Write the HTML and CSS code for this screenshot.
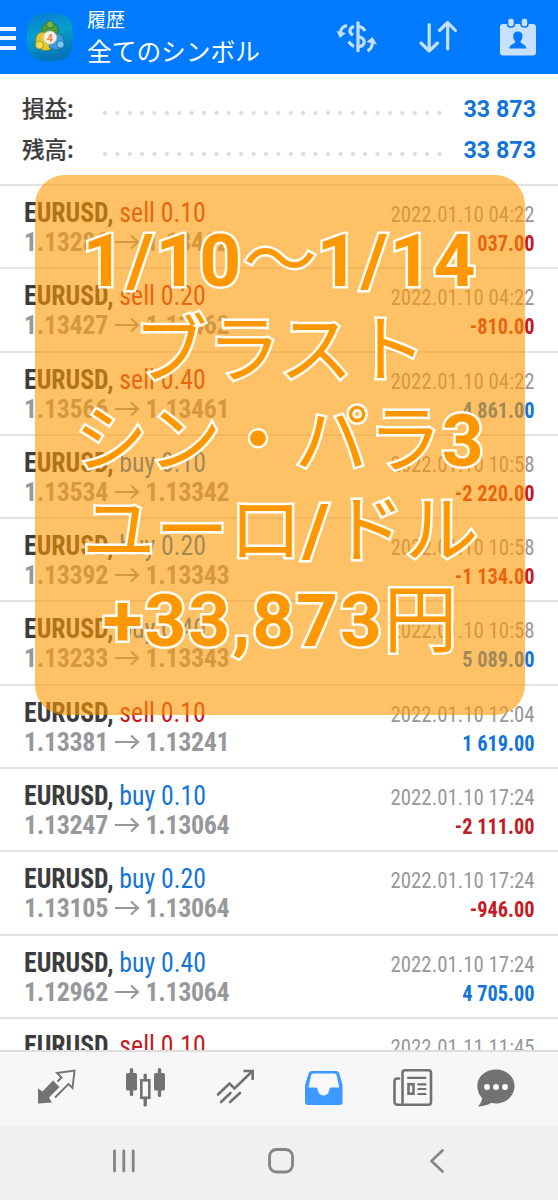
FILE: index.html
```html
<!DOCTYPE html>
<html lang="ja">
<head>
    <meta charset="UTF-8">
    <meta name="viewport" content="width=device-width, initial-scale=1.0">
    <title>履歴 - 全てのシンボル</title>
    <link rel="stylesheet" href="styles.css">
</head>
<body>
    <div class="phone">
        <header class="topbar">
            <div class="menu-button"><span></span><span></span><span></span></div>
            <svg class="app-icon" width="48" height="50" viewBox="0 0 48 50">
                <defs>
                    <linearGradient id="icon-bg" x1="0" y1="0" x2="0.25" y2="1">
                        <stop offset="0" stop-color="#0879d4"/>
                        <stop offset="0.5" stop-color="#06a0cc"/>
                        <stop offset="1" stop-color="#0774b8"/>
                    </linearGradient>
                </defs>
                <path d="M24 1C42 1 47 6 47 25S42 49 24 49S1 44 1 25S6 1 24 1Z" fill="url(#icon-bg)"/>
                <path d="M17 25C13 16 18 10 24 10.500S35 16 31 25Z" fill="#4b9a3c" stroke="#2c6b2c" stroke-width=".7"/>
                <path d="M22 22C14 17 9 23 10 31L16 38C23 39.500 26 37 27 33Z" fill="#e5c62f" stroke="#8d8a22" stroke-width=".7"/>
                <path d="M27 22C36 19 39 28 38 33C34 40 27 38 23 35Z" fill="#3f9ad8" stroke="#1d5f9a" stroke-width=".7"/>
                <circle cx="24" cy="12.500" r="3.600" fill="#73b54c" stroke="#2c6b2c" stroke-width=".7"/>
                <circle cx="13.500" cy="33" r="4" fill="#f4dc4d" stroke="#8d8a22" stroke-width=".7"/>
                <circle cx="34.500" cy="32.500" r="3.600" fill="#78c9f2" stroke="#1d5f9a" stroke-width=".7"/>
                <circle cx="24" cy="25.500" r="6.500" fill="#f6f1ea" stroke="#c9d0c4" stroke-width=".8"/>
                <text x="24" y="29.500" class="icon-digit">4</text>
            </svg>
            <div class="titles">
                <div class="title-small">履歴</div>
                <div class="title-big">全てのシンボル</div>
            </div>
            <div class="actions">
                <svg width="42" height="34" viewBox="0 0 42 34" fill="none" stroke="#c4e0ff" stroke-width="3.200">
                    <path d="M22 1.500V32"/>
                    <path d="M29 11C27.500 8 25 6.500 22 6.500M18 6.500C13 8 12.500 12.500 17 15.200M22 16.500C30 18 30.500 25.500 22 27M18 26.500C15.500 25.500 14 23.500 12.500 21.500"/>
                    <path d="M11 5.500C6.500 6.500 5 9 4.500 12"/>
                    <path d="M.5 11L10 13L4 18Z" fill="#c4e0ff" stroke="none"/>
                    <path d="M31.500 31C35 29 36.500 26 36.500 22"/>
                    <path d="M30.500 22L36.500 17L41 24.500Z" fill="#c4e0ff" stroke="none"/>
                </svg>
                <svg width="38" height="34" viewBox="0 0 38 34" fill="none" stroke="#c4e0ff" stroke-width="3.200" stroke-linecap="round" stroke-linejoin="round">
                    <path d="M10.200 4.500V31M2 23L10.200 31L18.500 23"/>
                    <path d="M28.700 29V2.500M20.500 10.500L28.700 2.500L36.400 10.500"/>
                </svg>
                <svg width="36" height="38" viewBox="0 0 36 38">
                    <rect x="0" y="6" width="36" height="31.500" rx="3" fill="#c9e1ff"/>
                    <rect x="7.500" y="0" width="7" height="9" rx="3" fill="#c9e1ff" stroke="#007aff" stroke-width="1.500"/>
                    <rect x="21" y="0" width="7" height="9" rx="3" fill="#c9e1ff" stroke="#007aff" stroke-width="1.500"/>
                    <path d="M17.800 13.500C21 13.500 22.700 15.500 22.500 18.500C22.300 21 21 22.500 20.500 23.500C20.500 26.500 26 25.500 26.300 30.500H9.300C9.600 25.500 15.300 26.500 15.300 23.500C14.500 22.500 13.400 21 13.200 18.500C13 15.500 14.700 13.500 17.800 13.500Z" fill="#007aff"/>
                </svg>
            </div>
        </header>

        <section class="summary">
            <div class="summary-row">
                <span class="summary-label">損益:</span>
                <span class="dots"></span>
                <span class="summary-value">33 873</span>
            </div>
            <div class="summary-row">
                <span class="summary-label">残高:</span>
                <span class="dots"></span>
                <span class="summary-value">33 873</span>
            </div>
        </section>

        <!-- trades -->
        <ul class="trades" id="trades"></ul>

        <nav class="tabs">
            <svg width="40" height="40" viewBox="0 0 40 40">
                <path d="M1 35.500V20.500L5.500 23.500L16 12.500L22.500 19L12 29.500L15 34.500Z" fill="#727272"/>
                <path d="M20.500 13.500L24.500 9.500L20 5L37.500 2.500L35.500 20L31.500 16L18 29.500" fill="none" stroke="#727272" stroke-width="1.900"/>
            </svg>
            <svg width="40" height="40" viewBox="0 0 40 40" fill="#727272">
                <rect x="1" y="5" width="11" height="17.500" rx="1.500"/>
                <rect x="4.800" y="0" width="3.400" height="28" rx="1.500"/>
                <rect x="29" y="5" width="11" height="17.500" rx="1.500"/>
                <rect x="32.800" y="0" width="3.400" height="29" rx="1.500"/>
                <rect x="18.500" y="5.500" width="3.400" height="7" rx="1.500"/>
                <rect x="18.500" y="28" width="3.400" height="10.500" rx="1.500"/>
                <rect x="16.300" y="12.300" width="8" height="17.500" fill="#f7f7f7" stroke="#727272" stroke-width="2.600"/>
            </svg>
            <svg width="40" height="40" viewBox="0 0 40 40" fill="none" stroke="#727272" stroke-width="2.600" stroke-linecap="round">
                <path d="M2 26.500L13.500 15.500L18.500 20.500L36 3.500"/>
                <path d="M27.500 3H36.700V12" stroke-linecap="butt"/>
                <path d="M5 34L14.500 25M14 34L24 25"/>
            </svg>
            <svg width="40" height="40" viewBox="0 0 40 40">
                <path d="M8 3H32Q34.500 3 35.200 5L38.500 17V34Q38.500 37 35.500 37H4Q1 37 1 34V17L4.800 5Q5.500 3 8 3Z" fill="#3d99ff"/>
                <path d="M9.500 5.500H30.500Q32 5.500 32.500 7L35.300 19.500H27.500Q25.500 19.500 25.500 21Q24.500 27.500 19.600 27.500T13.500 21Q13.500 19.500 12 19.500H4.500L7.200 7Q7.600 5.500 9.500 5.500Z" fill="#f8f8f8"/>
            </svg>
            <svg width="40" height="40" viewBox="0 0 40 40" fill="none" stroke="#727272" stroke-width="2.600">
                <path d="M9.500 34.500V5Q9.500 2.300 12 2.300H35.500Q38 2.300 38 5V34Q38 36.700 35.500 36.700H4.500Q1.500 36.700 1.500 33.500V13Q1.500 10.500 4.500 10.500H6" stroke-linecap="round"/>
                <path d="M15 9.800H32.500M25.300 16.300H32.500M25.300 21H32.500M25.300 26H32.500" stroke-linecap="round" stroke-width="2.200"/>
                <rect x="15.500" y="16.200" width="5" height="9.500"/>
            </svg>
            <svg width="40" height="40" viewBox="0 0 40 40">
                <path d="M20 1.500C30.500 1.500 38.500 8.500 38.500 18S30.500 35.500 20 35.500Q17.500 35.500 15.500 34.800Q9 38.500 1.800 38.700Q6 34.500 6 30Q1.300 25 1.300 18C1.300 8.500 9.500 1.500 20 1.500Z" fill="#727272"/>
                <g fill="#fff"><circle cx="11" cy="19" r="2.900"/><circle cx="20" cy="19" r="2.900"/><circle cx="29" cy="19" r="2.900"/></g>
            </svg>
        </nav>

        <footer class="system-nav">
            <svg width="24" height="26" viewBox="0 0 24 26" stroke="#858585" stroke-width="2.800" stroke-linecap="round">
                <path d="M2.500 3V23M11.800 3V23M21.200 3V23"/>
            </svg>
            <svg class="home" width="26" height="26" viewBox="0 0 26 26" fill="none" stroke="#858585" stroke-width="2.800">
                <rect x="1.500" y="1.500" width="23" height="22.500" rx="7"/>
            </svg>
            <svg width="16" height="26" viewBox="0 0 16 26" fill="none" stroke="#858585" stroke-width="2.600" stroke-linecap="round" stroke-linejoin="round">
                <path d="M13.500 2.500L2.500 13L13.500 23.500"/>
            </svg>
        </footer>

        <!-- caption over the list -->
        <div class="caption">
            <p><b>1/10</b>〜<b>1/14</b></p>
            <p>ブラスト</p>
            <p>シン・パラ<b>3</b></p>
            <p>ユーロ<b>/</b>ドル</p>
            <p><b>+33,873</b>円</p>
        </div>
    </div>

    <script>
        const trades = [
            ['sell', '0.10', '1.13286', '1.13462', '2022.01.10 04:22', '-1 037.00'],
            ['sell', '0.20', '1.13427', '1.13462', '2022.01.10 04:22', '-810.00'],
            ['sell', '0.40', '1.13566', '1.13461', '2022.01.10 04:22', '4 861.00'],
            ['buy', '0.10', '1.13534', '1.13342', '2022.01.10 10:58', '-2 220.00'],
            ['buy', '0.20', '1.13392', '1.13343', '2022.01.10 10:58', '-1 134.00'],
            ['buy', '0.40', '1.13233', '1.13343', '2022.01.10 10:58', '5 089.00'],
            ['sell', '0.10', '1.13381', '1.13241', '2022.01.10 12:04', '1 619.00'],
            ['buy', '0.10', '1.13247', '1.13064', '2022.01.10 17:24', '-2 111.00'],
            ['buy', '0.20', '1.13105', '1.13064', '2022.01.10 17:24', '-946.00'],
            ['buy', '0.40', '1.12962', '1.13064', '2022.01.10 17:24', '4 705.00'],
            ['sell', '0.10', '', '', '2022.01.11 11:45', '']
        ];

        const arrow = '<svg class="arrow" width="25" height="16" viewBox="0 0 25 16"><path d="M0 8H23M16 1.500L23 8L16 14.500"/></svg>';

        document.getElementById('trades').innerHTML = trades.map(([side, lot, open, close, time, profit]) => `
            <li class="trade">
                <div class="trade-left">
                    <div class="symbol"><b>EURUSD,</b> <span class="${side}">${side} ${lot}</span></div>
                    <div class="prices">${open ? `<span>${open}</span>${arrow}<span>${close}</span>` : ''}</div>
                </div>
                <div class="trade-right">
                    <div class="time">${time}</div>
                    <div class="profit ${profit.startsWith('-') ? 'loss' : 'gain'}">${profit}</div>
                </div>
            </li>`).join('');
    </script>
</body>
</html>
```
FILE: styles.css
```css
* {
    box-sizing: border-box;
}
body {
    margin: 0;
    font-family: Roboto, "Noto Sans CJK JP", sans-serif;
    background-color: #fff;
    color: #3c3c3e;
}
.phone {
    position: relative;
    display: flex;
    flex-direction: column;
    width: 558px;
    height: 1200px;
    overflow: hidden;
}

/* top bar */
.topbar {
    display: flex;
    align-items: center;
    flex: 0 0 74px;
    background-color: #007aff;
    color: #fff;
}
.menu-button {
    display: flex;
    flex-direction: column;
    gap: 5.500px;
    width: 16px;
    margin-top: 2px;
}
.menu-button span {
    height: 4px;
    background-color: #eef7ff;
}
.app-icon {
    margin-left: 10px;
}
.icon-digit {
    font: bold 11px Roboto, sans-serif;
    fill: #f08a3c;
    text-anchor: middle;
}
.titles {
    margin-left: 13px;
    padding-top: 2px;
    font-family: "Noto Sans CJK JP", sans-serif;
}
.title-small {
    font-size: 19px;
    line-height: 24px;
}
.title-big {
    font-size: 24.700px;
    line-height: 39px;
    white-space: nowrap;
}
.actions {
    display: flex;
    align-items: center;
    margin-left: auto;
    margin-right: 22px;
    gap: 43px;
}
.actions svg:first-child {
    margin-right: -2px;
}

/* totals */
.summary {
    flex: 0 0 110px;
    padding: 14px 22px 0;
}
.summary-row {
    display: flex;
    align-items: center;
    height: 41px;
}
.summary-label {
    width: 79px;
    margin-top: -4px;
    font: 500 22.500px "Noto Sans CJK JP", sans-serif;
    -webkit-text-stroke: 0.2px #3c3c3e;
}
.dots {
    width: 347px;
    height: 4px;
    margin-top: 8px;
    background: radial-gradient(circle at 4px 2px, #dcdcde 1.700px, transparent 2.300px) 0 0 / 12.400px 4px repeat-x;
}
.summary-value {
    margin-left: auto;
    font-size: 23.300px;
    font-weight: bold;
    color: #1274d9;
}

/* trade list */
.trades {
    flex: 1;
    margin: 0;
    padding: 0;
    overflow: hidden;
    list-style: none;
    font-stretch: 75%;
}
.trade {
    display: flex;
    justify-content: space-between;
    height: 83.300px;
    padding: 12px 23.500px 0 24px;
    border-top: 2px solid #e3e3e5;
    white-space: nowrap;
}
.symbol {
    font-size: 27px;
    line-height: 30px;
    transform: scaleX(0.953);
    transform-origin: left;
}
.prices {
    display: flex;
    align-items: center;
    font-size: 26px;
    line-height: 28px;
    letter-spacing: -0.350px;
    font-weight: bold;
    color: #97989b;
}
.arrow {
    margin: 0 5.500px 0 7px;
    fill: none;
    stroke: #97989b;
    stroke-width: 2.200;
}
.trade-right {
    text-align: right;
}
.time, .profit {
    font-size: 22.500px;
    transform-origin: right;
}
.time {
    line-height: 33px;
    color: #97989b;
    transform: scaleX(0.926);
}
.profit {
    line-height: 24px;
    font-weight: bold;
    transform: scaleX(0.905);
}
.sell, .loss {
    color: #c41a23;
}
.buy, .gain {
    color: #1274d9;
}

/* bottom bars */
.tabs {
    display: grid;
    grid-template-columns: 88px 90.500px 88.500px 89px 83px 40px;
    align-items: center;
    flex: 0 0 76px;
    padding: 0 0 2px 37px;
    background-color: #f7f7f7;
    border-top: 2px solid #dededf;
}
.system-nav {
    display: flex;
    align-items: center;
    justify-content: space-between;
    flex: 0 0 74px;
    padding: 0 113px 4px 112px;
    background-color: #f0f0f0;
}
.home {
    margin-right: 4px;
}

/* caption */
.caption {
    position: absolute;
    left: 35px;
    top: 175px;
    width: 490px;
    height: 540px;
    padding-top: 41px;
    border-radius: 30px;
    background-color: rgba(255, 152, 0, 0.6);
    color: #ff9800;
    font-size: 73.500px;
    line-height: 90px;
    text-align: center;
    white-space: nowrap;
    -webkit-text-stroke: 5px #fffdf6;
    paint-order: stroke fill;
}
.caption p {
    height: 90px;
    margin: 0;
}
.caption b {
    font-size: 73px;
    letter-spacing: 2px;
}
```
